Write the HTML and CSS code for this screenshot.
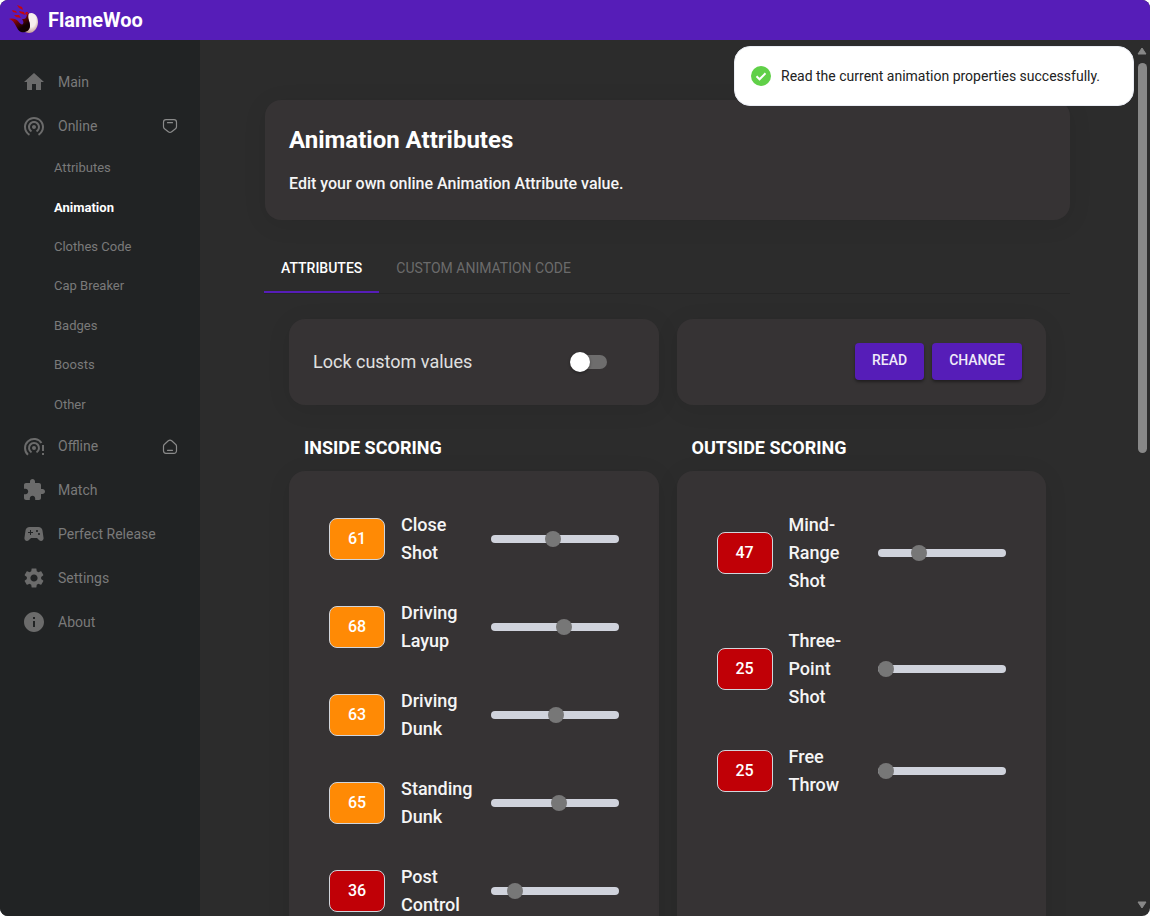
FILE: index.html
```html
<!DOCTYPE html>
<html lang="en">
<head>
    <meta charset="UTF-8">
    <meta name="viewport" content="width=device-width, initial-scale=1.0">
    <title>FlameWoo</title>
    <link rel="stylesheet" href="styles.css">
</head>
<body>
    <div class="app">
        <header class="topbar">
            <svg class="logo" viewBox="10 6 30 28" aria-hidden="true">
                <defs>
                    <linearGradient id="flame" x1="0" y1="0" x2="0.7" y2="1">
                        <stop offset="0.2" stop-color="#c4060c"/>
                        <stop offset="0.8" stop-color="#120002"/>
                    </linearGradient>
                    <radialGradient id="ball" cx="0.5" cy="0.35" r="0.7">
                        <stop offset="0.5" stop-color="#f6eeee"/>
                        <stop offset="1" stop-color="#b98a86"/>
                    </radialGradient>
                </defs>
                <path fill="url(#ball)" d="M28 14c5-3 10 1 10 8 0 6-4 11-9 11-2 0-4-1-5-2 6-1 7-6 5-10-1-3-2-5-1-7z"/>
                <path fill="url(#flame)" d="M9 19c4-1 7 0 9 2 2 3 4 4 5 3 1-2 0-3-1-5 3 0 4 0 5-4 0-1 1-2 2-2-2 5 1 9 1 13 0 5-5 7-9 6-5-2-5-11-12-13z"/>
                <path fill="#c4060c" d="M17 5l5 2 1 3-4-2zM12 10l4 1 1 2-4-1zM19 11l5 1 1 3-5-2zM14 15l5 0 2 3-5-1zM26 12l2 0-1 3-2-1z"/>
            </svg>
            <h1 class="brand">FlameWoo</h1>
        </header>

        <div class="layout">
            <nav class="sidebar">
                <a class="nav-item" href="#main">
                    <svg class="icon" viewBox="0 0 24 24"><path d="M10 20v-6h4v6h5v-8h3L12 3 2 12h3v8z"/></svg>
                    <span>Main</span>
                </a>
                <a class="nav-item" href="#online">
                    <svg class="icon" viewBox="0 0 24 24"><path d="M12 11c-1.1 0-2 .9-2 2s.9 2 2 2 2-.9 2-2-.9-2-2-2zm6 2c0-3.31-2.69-6-6-6s-6 2.69-6 6c0 2.22 1.21 4.15 3 5.19l1-1.74c-1.19-.7-2-1.97-2-3.45 0-2.21 1.79-4 4-4s4 1.79 4 4c0 1.48-.81 2.75-2 3.45l1 1.74c1.79-1.04 3-2.97 3-5.19zM12 3C6.48 3 2 7.48 2 13c0 3.7 2.01 6.92 4.99 8.65l1-1.73C5.61 18.53 4 15.96 4 13c0-4.42 3.58-8 8-8s8 3.58 8 8c0 2.96-1.61 5.53-4 6.92l1 1.73c2.99-1.73 5-4.95 5-8.65 0-5.52-4.48-10-10-10z"/></svg>
                    <span>Online</span>
                    <svg class="state" viewBox="0 0 16 16"><path d="M4 1.700h8a2.500 2.500 0 0 1 2.500 2.500v4.600c0 .8-.3 1.500-1 2l-3.800 3a2.800 2.800 0 0 1-3.400 0l-3.800-3c-.7-.5-1-1.200-1-2V4.200A2.500 2.500 0 0 1 4 1.700zM5.500 4.700h5"/></svg>
                </a>
                <div class="subnav">
                    <a href="#attributes">Attributes</a>
                    <a class="active" href="#animation">Animation</a>
                    <a href="#clothes">Clothes Code</a>
                    <a href="#cap">Cap Breaker</a>
                    <a href="#badges">Badges</a>
                    <a href="#boosts">Boosts</a>
                    <a href="#other">Other</a>
                </div>
                <a class="nav-item" href="#offline">
                    <svg class="icon" viewBox="0 0 24 24">
                        <circle cx="12" cy="14" r="2"/>
                        <path class="arc" d="M6 20.700A9 9 0 1 1 19.500 9M9.500 18.300A5 5 0 1 1 14.500 18.300"/>
                        <path d="M20 11h2v6h-2zM20 19h2v2h-2z"/>
                    </svg>
                    <span>Offline</span>
                    <svg class="state" viewBox="0 0 16 16"><path d="M4 15.300h8a2.500 2.500 0 0 0 2.500-2.500V8.200c0-.8-.3-1.500-1-2l-3.800-3.400a2.700 2.700 0 0 0-3.400 0l-3.800 3.400c-.7.5-1 1.200-1 2v4.600A2.500 2.500 0 0 0 4 15.300zM5.500 12.300h5"/></svg>
                </a>
                <a class="nav-item" href="#match">
                    <svg class="icon" viewBox="0 0 24 24"><path d="M20.500 11H19V7c0-1.100-.9-2-2-2h-4V3.500C13 2.120 11.880 1 10.500 1S8 2.120 8 3.500V5H4c-1.100 0-1.990.9-1.990 2v3.800H3.500c1.490 0 2.700 1.210 2.700 2.700s-1.210 2.700-2.700 2.700H2V20c0 1.100.9 2 2 2h3.800v-1.500c0-1.490 1.210-2.700 2.700-2.700 1.490 0 2.700 1.210 2.700 2.700V22H17c1.100 0 2-.9 2-2v-4h1.500c1.380 0 2.500-1.120 2.500-2.500S21.880 11 20.500 11z"/></svg>
                    <span>Match</span>
                </a>
                <a class="nav-item" href="#release">
                    <svg class="icon" viewBox="0 0 24 24"><path d="M21.580 16.090l-1.090-7.660C20.210 6.460 18.520 5 16.530 5H7.470C5.480 5 3.790 6.460 3.510 8.430l-1.090 7.660C2.200 17.630 3.390 19 4.940 19c.68 0 1.320-.27 1.800-.75L9 16h6l2.250 2.250c.48.48 1.130.75 1.800.75 1.560 0 2.750-1.370 2.530-2.910zM11 11H9v2H8v-2H6v-1h2V8h1v2h2v1zm4-1c-.55 0-1-.45-1-1s.45-1 1-1 1 .45 1 1-.45 1-1 1zm2 3c-.55 0-1-.45-1-1s.45-1 1-1 1 .45 1 1-.45 1-1 1z"/></svg>
                    <span>Perfect Release</span>
                </a>
                <a class="nav-item" href="#settings">
                    <svg class="icon" viewBox="0 0 24 24"><path d="M19.140 12.940c.04-.3.06-.61.06-.94 0-.32-.02-.64-.07-.94l2.030-1.580c.18-.14.23-.41.12-.61l-1.920-3.320c-.12-.22-.37-.29-.59-.22l-2.390.96c-.5-.38-1.030-.7-1.620-.94l-.36-2.540c-.04-.24-.24-.41-.48-.41h-3.840c-.24 0-.43.17-.47.41l-.36 2.540c-.59.24-1.130.57-1.620.94l-2.390-.96c-.22-.08-.47 0-.59.22L2.740 8.870c-.12.21-.08.47.12.61l2.030 1.580c-.05.3-.09.63-.09.94s.02.64.07.94l-2.030 1.580c-.18.14-.23.41-.12.61l1.920 3.320c.12.22.37.29.59.22l2.390-.96c.5.38 1.030.7 1.620.94l.36 2.540c.05.24.24.41.48.41h3.840c.24 0 .44-.17.47-.41l.36-2.540c.59-.24 1.130-.56 1.620-.94l2.390.96c.22.08.47 0 .59-.22l1.920-3.320c.12-.22.07-.47-.12-.61l-2.010-1.580zM12 15.600c-1.980 0-3.600-1.620-3.600-3.600s1.620-3.600 3.600-3.600 3.600 1.620 3.600 3.600-1.620 3.600-3.600 3.600z"/></svg>
                    <span>Settings</span>
                </a>
                <a class="nav-item" href="#about">
                    <svg class="icon" viewBox="0 0 24 24"><path d="M12 2C6.480 2 2 6.480 2 12s4.480 10 10 10 10-4.480 10-10S17.520 2 12 2zm1 15h-2v-6h2v6zm0-8h-2V7h2v2z"/></svg>
                    <span>About</span>
                </a>
            </nav>

            <main class="content">
                <section class="card hero">
                    <h2>Animation Attributes</h2>
                    <p>Edit your own online Animation Attribute value.</p>
                </section>

                <div class="tabs" role="tablist">
                    <button class="tab selected" role="tab" aria-selected="true">Attributes</button>
                    <button class="tab" role="tab" aria-selected="false">Custom Animation Code</button>
                </div>

                <div class="panel">
                    <div class="card lock">
                        <label for="lock">Lock custom values</label>
                        <input class="switch" type="checkbox" id="lock">
                    </div>
                    <div class="card actions">
                        <button class="btn">Read</button>
                        <button class="btn">Change</button>
                    </div>

                    <h3>INSIDE SCORING</h3>
                    <h3>OUTSIDE SCORING</h3>

                    <div class="card stats">
                        <div class="stat">
                            <input class="value mid" type="text" value="61" aria-label="Close Shot value">
                            <label for="close">Close Shot</label>
                            <input class="slider" type="range" id="close" min="25" max="99" value="61">
                        </div>
                        <div class="stat">
                            <input class="value mid" type="text" value="68" aria-label="Driving Layup value">
                            <label for="layup">Driving Layup</label>
                            <input class="slider" type="range" id="layup" min="25" max="99" value="68">
                        </div>
                        <div class="stat">
                            <input class="value mid" type="text" value="63" aria-label="Driving Dunk value">
                            <label for="ddunk">Driving Dunk</label>
                            <input class="slider" type="range" id="ddunk" min="25" max="99" value="63">
                        </div>
                        <div class="stat">
                            <input class="value mid" type="text" value="65" aria-label="Standing Dunk value">
                            <label for="sdunk">Standing Dunk</label>
                            <input class="slider" type="range" id="sdunk" min="25" max="99" value="65">
                        </div>
                        <div class="stat">
                            <input class="value low" type="text" value="36" aria-label="Post Control value">
                            <label for="post">Post Control</label>
                            <input class="slider" type="range" id="post" min="25" max="99" value="36">
                        </div>
                    </div>
                    <div class="card stats">
                        <div class="stat">
                            <input class="value low" type="text" value="47" aria-label="Mind-Range Shot value">
                            <label for="mid">Mind-Range Shot</label>
                            <input class="slider" type="range" id="mid" min="25" max="99" value="47">
                        </div>
                        <div class="stat">
                            <input class="value low" type="text" value="25" aria-label="Three-Point Shot value">
                            <label for="three">Three-Point Shot</label>
                            <input class="slider" type="range" id="three" min="25" max="99" value="25">
                        </div>
                        <div class="stat">
                            <input class="value low" type="text" value="25" aria-label="Free Throw value">
                            <label for="free">Free Throw</label>
                            <input class="slider" type="range" id="free" min="25" max="99" value="25">
                        </div>
                    </div>
                </div>
            </main>

            <div class="scrollbar" aria-hidden="true">
                <svg viewBox="0 0 10 8"><path d="M5 1l4 6H1z"/></svg>
                <div class="track"><div class="thumb"></div></div>
                <svg viewBox="0 0 10 8"><path d="M5 7l4-6H1z"/></svg>
            </div>
        </div>

        <div class="toast" role="status">
            <svg viewBox="0 0 20 20"><circle cx="10" cy="10" r="10"/><path d="M5.500 10.300l3 3 6-6"/></svg>
            <span>Read the current animation properties successfully.</span>
        </div>
    </div>
</body>
</html>
```
FILE: styles.css
```css
* {
    margin: 0;
    padding: 0;
    box-sizing: border-box;
}

body {
    background: white;
    font-family: Roboto, "Liberation Sans", sans-serif;
}

button, input {
    font-family: inherit;
    border: none;
}

a {
    color: inherit;
    text-decoration: none;
}

.app {
    position: relative;
    height: 100vh;
    display: flex;
    flex-direction: column;
    background: #2c2c2c;
    border-radius: 8px;
    overflow: hidden;
}

/* top bar */
.topbar {
    flex: none;
    height: 40px;
    padding: 0 10px;
    display: flex;
    align-items: center;
    gap: 8px;
    background: #561db8;
}
.logo {
    width: 30px;
    height: 28px;
    overflow: visible;
}
.brand {
    color: white;
    font-size: 20px;
    font-weight: 700;
}

.layout {
    flex: 1;
    min-height: 0;
    display: flex;
}

/* sidebar */
.sidebar {
    flex: none;
    width: 200px;
    padding-top: 20px;
    background: #212324;
    color: #7a7a7a;
    font-size: 14px;
}
.nav-item {
    height: 44px;
    padding: 0 22px;
    display: flex;
    align-items: center;
    gap: 12px;
}
.icon {
    width: 24px;
    height: 24px;
    fill: #6b6b6b;
}
.arc {
    fill: none;
    stroke: #6b6b6b;
    stroke-width: 2;
}
.state {
    width: 16px;
    height: 16px;
    margin-left: auto;
    fill: none;
    stroke: #8a8a8a;
    stroke-width: 1.2;
    stroke-linecap: round;
}
.subnav {
    height: 276px;
    padding-left: 54px;
    display: flex;
    flex-direction: column;
    font-size: 13px;
}
.subnav a {
    flex: 1;
    display: flex;
    align-items: center;
}
.subnav .active {
    color: white;
    font-weight: 700;
}

/* content */
.content {
    flex: 1;
    min-width: 0;
    padding: 60px 64px 60px 65px;
    overflow: hidden;
    color: #f5f5f5;
}
.card {
    background: #363334;
    border-radius: 16px;
    box-shadow: 0 4px 24px rgba(0, 0, 0, .08);
}
.hero {
    padding: 24px;
}
.hero h2 {
    margin-bottom: 16px;
    color: white;
    font-size: 24px;
    line-height: 32px;
}
.hero p {
    font-size: 16px;
    font-weight: 500;
    line-height: 24px;
}

.tabs {
    margin: 24px 0 0 -1px;
    display: flex;
    border-bottom: 1px solid #262626;
}
.tab {
    height: 49px;
    padding: 0 17px;
    background: none;
    border-bottom: 2px solid transparent;
    color: #6b6b6b;
    font-size: 14px;
    text-transform: uppercase;
}
.tab.selected {
    border-color: #561db8;
    color: white;
    font-weight: 500;
}

.panel {
    padding: 25px 24px;
    display: grid;
    grid-template-columns: 1fr 1fr;
    column-gap: 18px;
}
.panel h3 {
    padding: 28px 15px 9px;
    color: white;
    font-size: 18px;
    line-height: 29px;
}
.lock {
    padding: 24px 40px 24px 24px;
    display: flex;
    align-items: center;
    justify-content: space-between;
    color: #e0e0e0;
    font-size: 18px;
    line-height: 28px;
}
.switch {
    appearance: none;
    width: 58px;
    height: 38px;
    padding: 12px;
    display: flex;
    align-items: center;
}
.switch::before {
    content: "";
    width: 20px;
    height: 20px;
    margin: 0 -17px 0 -3px;
    background: white;
    border-radius: 50%;
    box-shadow: 0 1px 3px rgba(0, 0, 0, .4);
    z-index: 1;
}
.switch::after {
    content: "";
    flex: none;
    width: 34px;
    height: 14px;
    background: #6e6d6d;
    border-radius: 7px;
}
.actions {
    padding: 24px;
    display: flex;
    align-items: flex-start;
    justify-content: flex-end;
    gap: 8px;
}
.btn {
    height: 37px;
    padding: 0 17px 3px;
    background: #561db8;
    border-radius: 4px;
    box-shadow: 0 2px 3px rgba(0, 0, 0, .4);
    color: #f0eaf8;
    font-size: 14px;
    font-weight: 500;
    text-transform: uppercase;
}

/* attribute rows */
.stats {
    padding: 40px;
    display: flex;
    flex-direction: column;
    gap: 32px;
}
.stat {
    display: flex;
    align-items: center;
    gap: 16px;
}
.stat label {
    flex: 1;
    font-size: 18px;
    font-weight: 500;
    line-height: 28px;
}
.value {
    width: 56px;
    height: 42px;
    padding-bottom: 2px;
    border: 1px solid #d1d5db;
    border-radius: 8px;
    color: white;
    font-size: 16px;
    font-weight: 500;
    text-align: center;
}
.mid {
    background: #ff8a05;
}
.low {
    background: #c00006;
}
.slider {
    appearance: none;
    width: 128px;
    height: 8px;
    background: #d0d3dc;
    border-radius: 4px;
}
.slider::-webkit-slider-thumb {
    appearance: none;
    width: 16px;
    height: 16px;
    background: #777777;
    border-radius: 50%;
}

.scrollbar {
    flex: none;
    width: 16px;
    padding: 7px 3px;
    display: flex;
    flex-direction: column;
    gap: 8px;
}
.scrollbar svg {
    width: 10px;
    height: 8px;
    fill: #888888;
    stroke: #888888;
    stroke-linejoin: round;
}
.track {
    flex: 1;
}
.thumb {
    width: 9px;
    height: 47%;
    margin: 0 auto;
    background: #888888;
    border-radius: 5px;
}

/* notification */
.toast {
    position: absolute;
    top: 46px;
    right: 16px;
    width: 400px;
    height: 60px;
    padding: 0 16px;
    display: flex;
    align-items: center;
    gap: 10px;
    background: white;
    border: 1px solid #ebeef5;
    border-radius: 16px;
    color: #222222;
    font-size: 14px;
}
.toast svg {
    width: 20px;
    height: 20px;
    fill: #60d048;
}
.toast path {
    fill: none;
    stroke: white;
    stroke-width: 2;
}
```
